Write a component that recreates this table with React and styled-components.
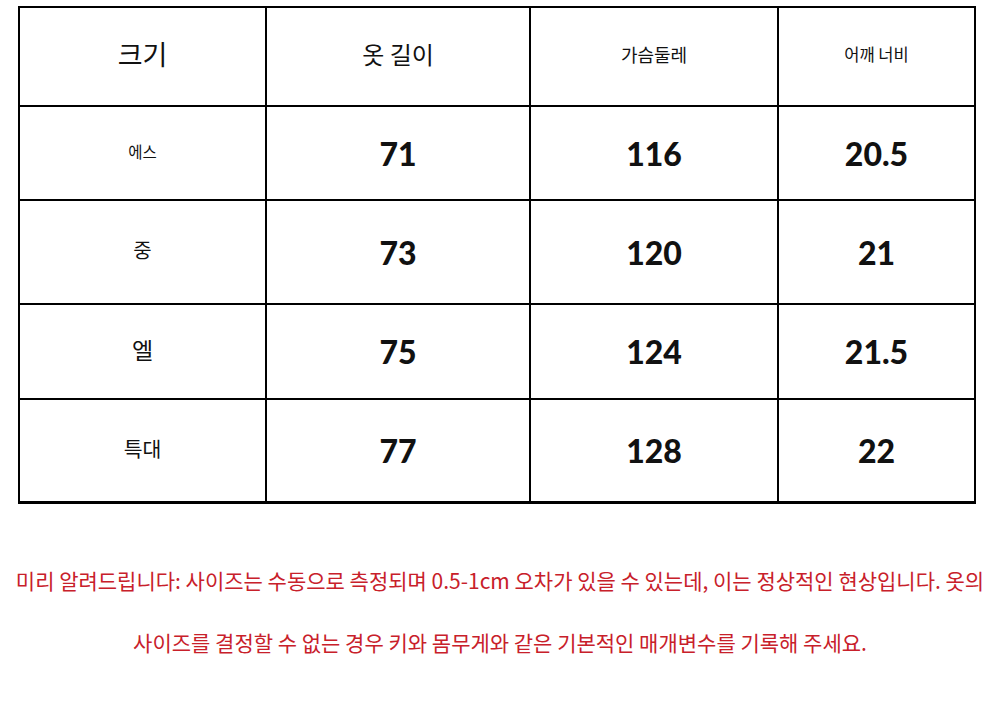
import React from 'react';
import styled, {createGlobalStyle} from 'styled-components';

const GlobalStyle = createGlobalStyle`
  body {
    margin: 0;
    background: #fff;
    font-family: "Noto Sans CJK KR", "Noto Sans", sans-serif;
  }
`;

const Page = styled.div`
  width: 1000px;
  height: 728px;
  padding-top: 6px;
  box-sizing: border-box;
`;

const Table = styled.table`
  margin-left: 18px;
  width: 956px;
  border-collapse: collapse;
  table-layout: fixed;
  border: 2px solid #000;
  border-bottom-width: 3px;
`;

const Cell = styled.td`
  border: 2px solid #000;
  height: ${props => props.h}px;
  padding: 0;
  text-align: center;
  vertical-align: middle;
  color: #111;
`;

const Label = styled.span`
  font-family: "Noto Sans CJK KR", sans-serif;
  font-size: ${props => props.size}px;
  position: relative;
  top: ${props => props.dy || 0}px;
`;

const Num = styled.span`
  font-family: Lato, "Noto Sans", sans-serif;
  font-weight: 900;
  font-size: 32px;
  color: #111;
`;

const Notice = styled.div`
  margin-top: 45px;
  text-align: center;
  color: #c8202a;
  font-family: "Noto Sans CJK KR", sans-serif;
  font-size: 21px;
  line-height: 62px;
  white-space: nowrap;
`;

const widths = [247, 264, 248, 197];

const header = [
  {text: '크기', size: 27},
  {text: '옷 길이', size: 24},
  {text: '가슴둘레', size: 18},
  {text: '어깨 너비', size: 16.5},
];

const rows = [
  {label: '에스', size: 15.5, dy: -2, h: 92, vals: ['71', '116', '20.5']},
  {label: '중', size: 20, dy: -3, h: 102, vals: ['73', '120', '21']},
  {label: '엘', size: 23, dy: -3, h: 93, vals: ['75', '124', '21.5']},
  {label: '특대', size: 20.5, dy: -3, h: 101, vals: ['77', '128', '22']},
];

function App() {
  return (
    <Page>
      <GlobalStyle />
      <Table>
        <colgroup>
          {widths.map((w, i) => <col key={i} style={{width: w}} />)}
        </colgroup>
        <tbody>
          <tr>
            {header.map(hd => (
              <Cell key={hd.text} h={97}>
                <Label size={hd.size} dy={-3}>{hd.text}</Label>
              </Cell>
            ))}
          </tr>
          {rows.map(r => (
            <tr key={r.label}>
              <Cell h={r.h}><Label size={r.size} dy={r.dy}>{r.label}</Label></Cell>
              {r.vals.map((v, i) => (
                <Cell key={i} h={r.h}><Num>{v}</Num></Cell>
              ))}
            </tr>
          ))}
        </tbody>
      </Table>
      <Notice>
        미리 알려드립니다: 사이즈는 수동으로 측정되며 0.5-1cm 오차가 있을 수 있는데, 이는 정상적인 현상입니다. 옷의
        <br />
        사이즈를 결정할 수 없는 경우 키와 몸무게와 같은 기본적인 매개변수를 기록해 주세요.
      </Notice>
    </Page>
  );
}

export default App;
